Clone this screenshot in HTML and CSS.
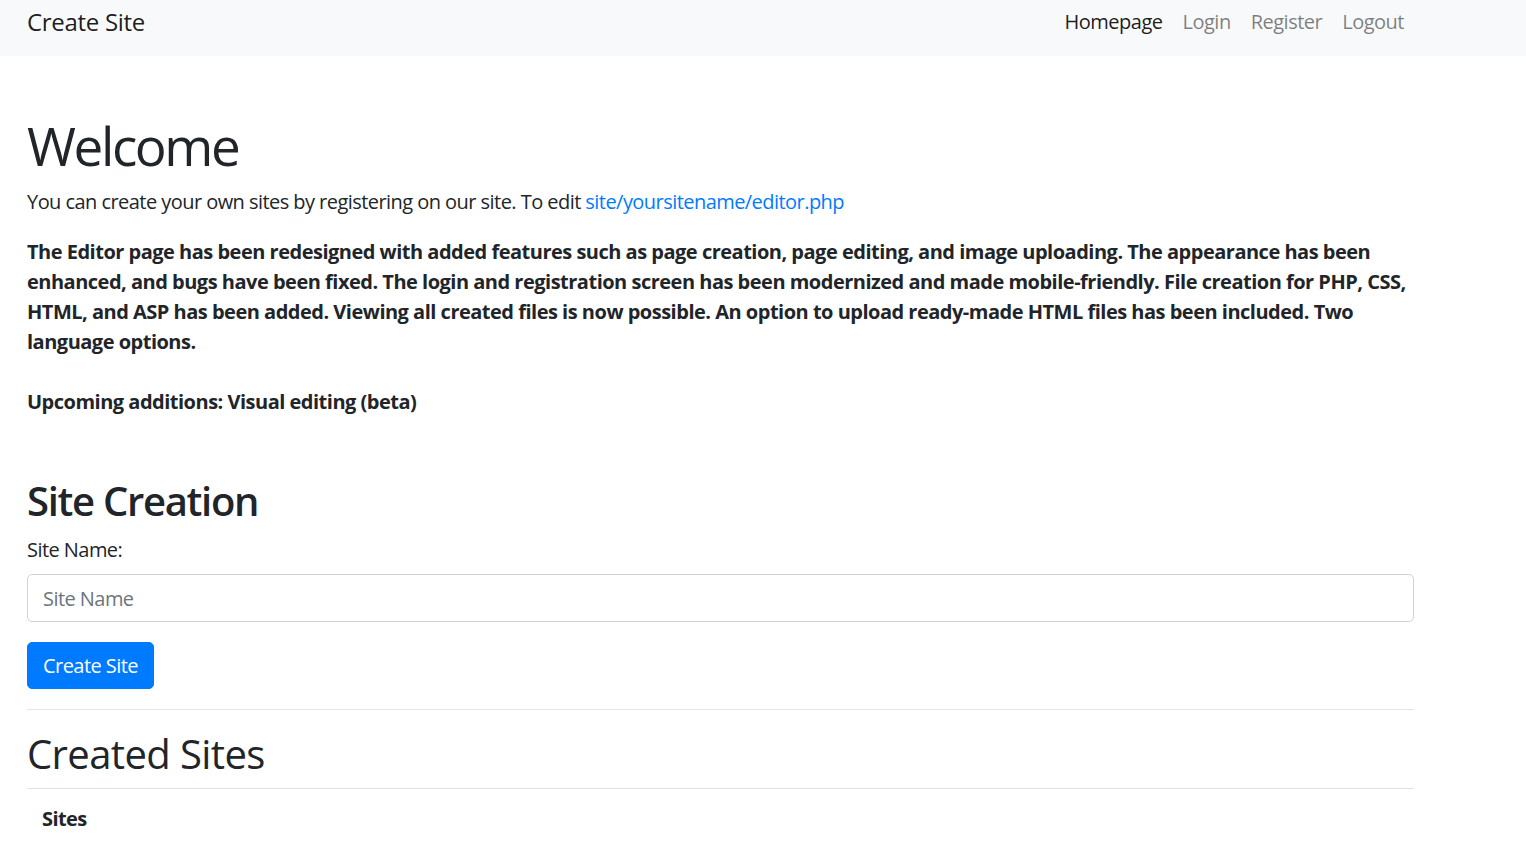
FILE: index.html
```html
<!DOCTYPE html>
<html lang="en">
<head>
<meta charset="utf-8">
<title>Create Site</title>
<link rel="stylesheet" href="styles.css">
</head>
<body>
<nav class="navbar">
  <div class="container navbar-inner">
    <a class="brand" href="#">Create Site</a>
    <ul class="nav">
      <li><a class="nav-link active" href="#">Homepage</a></li>
      <li><a class="nav-link" href="#">Login</a></li>
      <li><a class="nav-link" href="#">Register</a></li>
      <li><a class="nav-link" href="#">Logout</a></li>
    </ul>
  </div>
</nav>
<main class="container">
  <section class="intro">
    <h1 class="title">Welcome</h1>
    <p class="lead-line">You can create your own sites by registering on our site. To edit <a href="#" class="link">site/yoursitename/editor.php</a></p>
    <p class="features"><b>The Editor page has been redesigned with added features such as page creation, page editing, and image uploading. The appearance has been enhanced, and bugs have been fixed. The login and registration screen has been modernized and made mobile-friendly. File creation for PHP, CSS, HTML, and ASP has been added. Viewing all created files is now possible. An option to upload ready-made HTML files has been included. Two language options.<br><br>Upcoming additions: Visual editing (beta)</b></p>
  </section>
  <section class="create">
    <h2 class="section-title strong">Site Creation</h2>
    <form class="form">
      <div class="form-group">
        <label class="label" for="siteName">Site Name:</label>
        <input class="input" id="siteName" type="text" placeholder="Site Name">
      </div>
      <button class="btn" type="button">Create Site</button>
    </form>
  </section>
  <hr class="divider">
  <section class="created">
    <h2 class="section-title">Created Sites</h2>
    <table class="table">
      <thead><tr><th>Sites</th></tr></thead>
      <tbody></tbody>
    </table>
  </section>
</main>
</body>
</html>
```

FILE: styles.css
```css
* { box-sizing: border-box; }
html, body { margin: 0; padding: 0; }
body {
  font-family: "Open Sans", "Noto Sans", sans-serif;
  font-size: 20px;
  line-height: 30px;
  letter-spacing: -0.55px;
  color: #212529;
  background: #fff;
}
.container {
  width: 1387px;
  margin-left: 27px;
}
.navbar {
  background: #f8f9fa;
  height: 56px;
}
.navbar-inner {
  display: flex;
  align-items: center;
  justify-content: space-between;
  height: 44px;
}
.brand {
  font-size: 24px;
  line-height: 30px;
  letter-spacing: -0.3px;
  color: rgba(0,0,0,.9);
  text-decoration: none;
}
.nav {
  display: flex;
  list-style: none;
  margin: 0;
  padding: 0;
}
.nav-link {
  display: block;
  padding: 0 10px;
  font-size: 20px;
  line-height: 30px;
  letter-spacing: -0.5px;
  color: rgba(0,0,0,.5);
  text-decoration: none;
}
.nav-link.active { color: rgba(0,0,0,.9); }
.intro { padding-top: 57px; }
.title {
  margin: 0 0 8px;
  font-size: 53px;
  line-height: 66px;
  font-weight: 500;
  letter-spacing: -2.4px;
}
.lead-line { margin: 0 0 20px; }
.link { color: #007bff; text-decoration: none; }
.features { margin: 0; }
.features b { font-weight: 700; letter-spacing: -0.5px; }
.create { padding-top: 59px; }
.section-title {
  margin: 0 0 9px;
  font-size: 40px;
  line-height: 50px;
  font-weight: 400;
  letter-spacing: -0.6px;
}
.section-title.strong { font-weight: 600; letter-spacing: -1.3px; }
.form-group { margin-bottom: 20px; }
.label { display: block; margin-bottom: 9px; }
.input {
  display: block;
  width: 100%;
  height: 48px;
  padding: 8px 15px;
  font: inherit;
  letter-spacing: -0.55px;
  color: #495057;
  border: 1px solid #ced4da;
  border-radius: 5px;
  background: #fff;
}
.input::placeholder { color: #6c757d; }
.btn {
  display: block;
  height: 47px;
  padding: 7px 15px;
  font: inherit;
  letter-spacing: -0.55px;
  color: #fff;
  background: #007bff;
  border: 1px solid #007bff;
  border-radius: 5px;
}
.divider {
  margin: 20px 0;
  border: 0;
  border-top: 1px solid rgba(0,0,0,.1);
}
.created .section-title { margin-bottom: 10px; line-height: 48px; }
.table {
  width: 100%;
  border-collapse: collapse;
}
.table th {
  text-align: left;
  padding: 15px;
  border-top: 1px solid #dee2e6;
  font-weight: 700;
  letter-spacing: -0.6px;
}
```
